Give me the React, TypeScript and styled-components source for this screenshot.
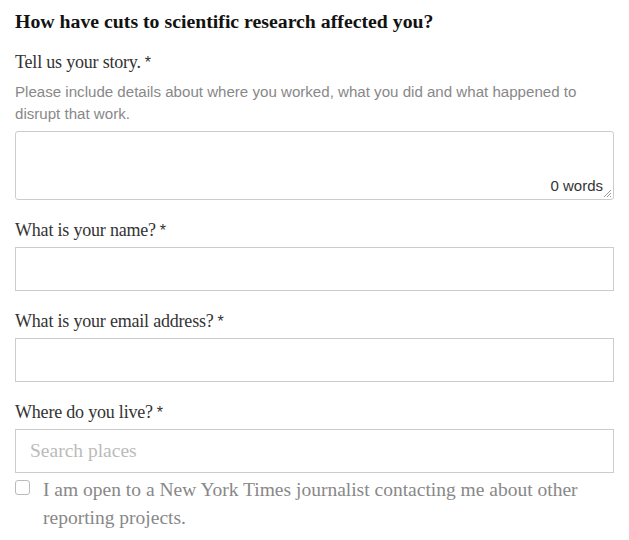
import * as React from 'react'
import styled, { createGlobalStyle } from 'styled-components'

const GlobalStyle = createGlobalStyle`
  html, body { margin: 0; padding: 0; background: #fff; }
  * { box-sizing: border-box; }
`

const Form = styled.form`
  display: flex;
  flex-direction: column;
  padding: 8px 15px 0 15px;
  width: 629px;
  font-family: "Liberation Serif", "DejaVu Serif", serif;
`

const Heading = styled.h2`
  margin: 0;
  font-size: 19.8px;
  line-height: 26px;
  font-weight: 700;
  color: #121212;
`

const Field = styled.div<{ $mt: number }>`
  display: flex;
  flex-direction: column;
  margin-top: ${p => p.$mt}px;
`

const Label = styled.label`
  font-size: 18px;
  line-height: 24px;
  color: #333;
  margin-bottom: 4px;
  letter-spacing: -0.2px;
`

const Req = styled.span`
  margin-left: 4px;
  font-family: "Liberation Sans", Arial, sans-serif;
  font-size: 16px;
`

const Help = styled.p`
  margin: 2px 0 6px;
  font-family: "Liberation Sans", Arial, sans-serif;
  font-size: 15.1px;
  line-height: 22px;
  color: #888;
`

const AreaWrap = styled.div`
  position: relative;
  height: 69px;
  border: 1px solid #ccc;
  border-radius: 3px;
`

const Area = styled.textarea`
  width: 100%;
  height: 100%;
  border: none;
  resize: none;
  outline: none;
  background: transparent;
`

const WordCount = styled.span`
  position: absolute;
  right: 10px;
  bottom: 5px;
  font-family: "Liberation Sans", Arial, sans-serif;
  font-size: 15px;
  color: #333;
`

const Grip = styled.svg`
  position: absolute;
  right: 1px;
  bottom: 1px;
`

const TextInput = styled.input`
  height: 44px;
  width: 100%;
  border: 1px solid #ccc;
  border-radius: 0;
  padding: 0 14px;
  font-family: "Liberation Serif", "DejaVu Serif", serif;
  font-size: 19.5px;
  color: #333;
  outline: none;
  &::placeholder { color: #bbb; }
`

const CheckRow = styled.label`
  display: flex;
  align-items: flex-start;
  gap: 13px;
  margin-top: 3px;
  font-size: 19.5px;
  line-height: 28px;
  color: #888;
`

const Box = styled.span`
  flex: none;
  width: 15px;
  height: 15px;
  margin-top: 4px;
  border: 1px solid #bbb;
  border-radius: 3px;
  background: #fff;
`

export default function App() {
  return (
    <>
      <GlobalStyle />
      <Form onSubmit={e => e.preventDefault()}>
        <Heading>How have cuts to scientific research affected you?</Heading>

        <Field $mt={16}>
          <Label>Tell us your story.<Req>*</Req></Label>
          <Help>
            Please include details about where you worked, what you did and what happened to disrupt that work.
          </Help>
          <AreaWrap>
            <Area />
            <WordCount>0 words</WordCount>
            <Grip width="10" height="10" viewBox="0 0 10 10">
              <path d="M9 2 L2 9 M9 5 L5 9 M9 8 L8 9" stroke="#999" strokeWidth="1" />
            </Grip>
          </AreaWrap>
        </Field>

        <Field $mt={18}>
          <Label>What is your name?<Req>*</Req></Label>
          <TextInput type="text" />
        </Field>

        <Field $mt={18}>
          <Label>What is your email address?<Req>*</Req></Label>
          <TextInput type="email" />
        </Field>

        <Field $mt={18}>
          <Label>Where do you live?<Req>*</Req></Label>
          <TextInput type="text" placeholder="Search places" />
        </Field>

        <CheckRow>
          <Box />
          <span>I am open to a New York Times journalist contacting me about other reporting projects.</span>
        </CheckRow>
      </Form>
    </>
  )
}
